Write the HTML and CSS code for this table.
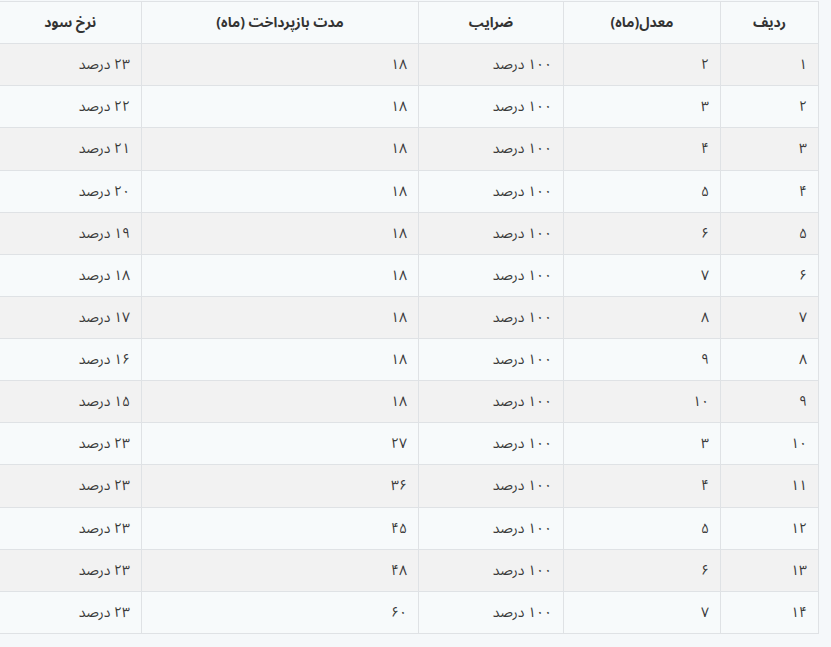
FILE: index.html
```html
<!DOCTYPE html>
<html lang="fa" dir="rtl">
<head>
<meta charset="utf-8">
<link rel="stylesheet" href="styles.css">
</head>
<body>
<div class="wrap">
<table class="rates">
<colgroup>
<col class="c-row"><col class="c-avg"><col class="c-coef"><col class="c-term"><col class="c-rate">
</colgroup>
<thead>
<tr><th>ردیف</th><th>معدل(ماه)</th><th>ضرایب</th><th>مدت بازپرداخت (ماه)</th><th>نرخ سود</th></tr>
</thead>
<tbody>
<tr><td>۱</td><td>۲</td><td>۱۰۰ درصد</td><td>۱۸</td><td>۲۳ درصد</td></tr>
<tr><td>۲</td><td>۳</td><td>۱۰۰ درصد</td><td>۱۸</td><td>۲۲ درصد</td></tr>
<tr><td>۳</td><td>۴</td><td>۱۰۰ درصد</td><td>۱۸</td><td>۲۱ درصد</td></tr>
<tr><td>۴</td><td>۵</td><td>۱۰۰ درصد</td><td>۱۸</td><td>۲۰ درصد</td></tr>
<tr><td>۵</td><td>۶</td><td>۱۰۰ درصد</td><td>۱۸</td><td>۱۹ درصد</td></tr>
<tr><td>۶</td><td>۷</td><td>۱۰۰ درصد</td><td>۱۸</td><td>۱۸ درصد</td></tr>
<tr><td>۷</td><td>۸</td><td>۱۰۰ درصد</td><td>۱۸</td><td>۱۷ درصد</td></tr>
<tr><td>۸</td><td>۹</td><td>۱۰۰ درصد</td><td>۱۸</td><td>۱۶ درصد</td></tr>
<tr><td>۹</td><td>۱۰</td><td>۱۰۰ درصد</td><td>۱۸</td><td>۱۵ درصد</td></tr>
<tr><td>۱۰</td><td>۳</td><td>۱۰۰ درصد</td><td>۲۷</td><td>۲۳ درصد</td></tr>
<tr><td>۱۱</td><td>۴</td><td>۱۰۰ درصد</td><td>۳۶</td><td>۲۳ درصد</td></tr>
<tr><td>۱۲</td><td>۵</td><td>۱۰۰ درصد</td><td>۴۵</td><td>۲۳ درصد</td></tr>
<tr><td>۱۳</td><td>۶</td><td>۱۰۰ درصد</td><td>۴۸</td><td>۲۳ درصد</td></tr>
<tr><td>۱۴</td><td>۷</td><td>۱۰۰ درصد</td><td>۶۰</td><td>۲۳ درصد</td></tr>
</tbody>
</table>
</div>
</body>
</html>
```

FILE: styles.css
```css
html, body {
  margin: 0;
  padding: 0;
  background: #f5f8fa;
}
body {
  font-family: "Noto Sans Arabic", "Noto Sans", "DejaVu Sans", sans-serif;
  color: #3a3a3a;
}
.wrap {
  padding-top: 1px;
  padding-right: 12px;
}
.rates {
  border-collapse: collapse;
  table-layout: fixed;
  width: 819px;
  font-size: 14px;
}
.c-row { width: 98px; }
.c-avg { width: 157px; }
.c-coef { width: 145px; }
.c-term { width: 277px; }
.c-rate { width: 142px; }
.rates th,
.rates td {
  border: 1px solid #dfe2e5;
  height: 42.14px;
  padding: 0 11px;
  box-sizing: border-box;
}
.rates th:last-child,
.rates td:last-child {
  border-left: 0;
}
.rates th {
  background: #f7fafb;
  font-weight: bold;
  text-align: center;
  color: #333;
}
.rates td {
  text-align: right;
}
.rates tbody tr:nth-child(odd) td {
  background: #f2f2f2;
}
.rates tbody tr:nth-child(even) td {
  background: #f7fafb;
}
```
